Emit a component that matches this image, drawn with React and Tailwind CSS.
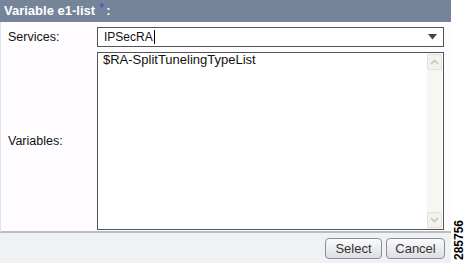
export default function App() {
  return (
    <div className="flex w-[466px] h-[263px] bg-white font-['Liberation_Sans',Arial,sans-serif] text-[12px] text-[#111]">
      {/* Dialog */}
      <div className="flex flex-col w-[451px] h-full">
        <div className="h-[22px] shrink-0 bg-[#76849a] text-white font-bold text-[13px] flex items-center pl-[4px] whitespace-nowrap">
          <span>Variable e1-list</span>
          <span className="self-start ml-[4px] pt-[2px] text-[#2a55d8] font-normal text-[13px] leading-[12px]">*</span>
          <span className="ml-[2px]">:</span>
        </div>

        <div className="flex-1 flex flex-col bg-[#fefcfe] border-l border-[#e4e4e8] border-b-2 border-b-[#b9bcc0] pt-[5px] pb-[1px]">
          <div className="flex items-center h-[20px]">
            <div className="w-[96px] pl-[7px] text-[12.5px]">Services:</div>
            <div className="w-[347px] h-[20px] border border-[#555] bg-white flex items-center pl-[6px] pr-[6px]">
              <span className="text-[12px]">IPSecRA</span>
              <span className="w-px h-[14px] bg-black ml-[1px]" />
              <span className="flex-1" />
              <svg width="9" height="6" viewBox="0 0 9 6">
                <path d="M0 0 L9 0 L4.5 5.5 Z" fill="#444" />
              </svg>
            </div>
          </div>

          <div className="flex items-center flex-1 mt-[5px]">
            <div className="w-[96px] pl-[7px] text-[12.5px]">Variables:</div>
            <div className="w-[347px] h-full border border-[#555] bg-white flex">
              <div className="flex-1 pl-[5px] text-[13px] leading-[14px]">$RA-SplitTunelingTypeList</div>
              <div className="w-[15px] h-full flex flex-col bg-[#f7f6f2] mr-[1px]">
                <div className="h-[16px] mt-[1px] border border-[#e2e2dc] bg-[#f3f2ec] flex items-center justify-center rounded-[2px]">
                  <svg width="9" height="6" viewBox="0 0 9 6">
                    <path d="M1 5 L4.5 1.5 L8 5" stroke="#c4c4bd" strokeWidth="1.6" fill="none" />
                  </svg>
                </div>
                <div className="flex-1" />
                <div className="h-[16px] mb-[1px] border border-[#e2e2dc] bg-[#f3f2ec] flex items-center justify-center rounded-[2px]">
                  <svg width="9" height="6" viewBox="0 0 9 6">
                    <path d="M1 1 L4.5 4.5 L8 1" stroke="#c4c4bd" strokeWidth="1.6" fill="none" />
                  </svg>
                </div>
              </div>
            </div>
          </div>
        </div>

        <div className="h-[30px] shrink-0 bg-[#eef2f5] flex items-center justify-end gap-[4px] pr-[6px]">
          <button className="w-[57px] h-[21px] rounded-[4px] border border-[#8a8e94] bg-gradient-to-b from-[#fbfbfb] to-[#dcdfe3] text-[13px] text-[#333]">
            Select
          </button>
          <button className="w-[59px] h-[21px] rounded-[4px] border border-[#8a8e94] bg-gradient-to-b from-[#fbfbfb] to-[#dcdfe3] text-[13px] text-[#333]">
            Cancel
          </button>
        </div>
      </div>

      {/* Figure number */}
      <div className="flex-1 flex flex-col justify-end items-center pb-[3px]">
        <span className="[writing-mode:vertical-rl] rotate-180 font-bold text-[12px] text-black leading-none">285756</span>
      </div>
    </div>
  );
}
